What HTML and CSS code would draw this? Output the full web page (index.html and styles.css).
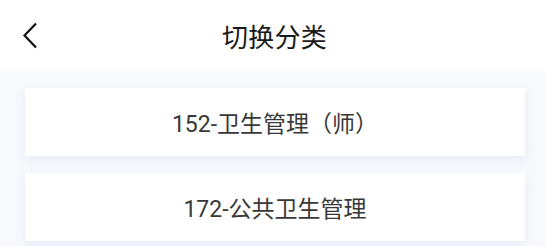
FILE: index.html
```html
<!DOCTYPE html>
<html lang="zh-CN">
<head>
<meta charset="utf-8">
<title>切换分类</title>
<link rel="stylesheet" href="styles.css">
</head>
<body>
<header class="nav">
  <span class="back">
    <svg width="16" height="27" viewBox="0 0 16 27"><path d="M14 1.5 L2.5 13.5 L14 25.5" fill="none" stroke="#111" stroke-width="2.2"/></svg>
  </span>
  <h1 class="title">切换分类</h1>
</header>
<main class="list">
  <div class="card">152-卫生管理（师）</div>
  <div class="card">172-公共卫生管理</div>
</main>
</body>
</html>
```
FILE: styles.css
```css
html, body { margin: 0; padding: 0; }
body {
  width: 545px;
  height: 246px;
  overflow: hidden;
  background: #f7f9fc;
  font-family: Roboto, "Noto Sans CJK SC", sans-serif;
}
.nav {
  height: 69px;
  background: #fff;
  display: flex;
  align-items: center;
  justify-content: center;
  position: relative;
}
.back {
  position: absolute;
  left: 22px;
  top: 22px;
  width: 16px;
  height: 27px;
  display: flex;
}
.title {
  margin: 0 0 0 4px;
  font-size: 26px;
  font-weight: 400;
  color: #1a1a1a;
  letter-spacing: 0.3px;
  padding-top: 1px;
}
.list {
  display: flex;
  flex-direction: column;
  gap: 17px;
  padding: 19px 20px 0 25px;
}
.card {
  height: 68px;
  background: #fff;
  display: flex;
  align-items: center;
  justify-content: center;
  font-size: 23px;
  color: #383838;
  box-shadow: 0 4px 10px rgba(200, 215, 240, 0.35);
}
```
